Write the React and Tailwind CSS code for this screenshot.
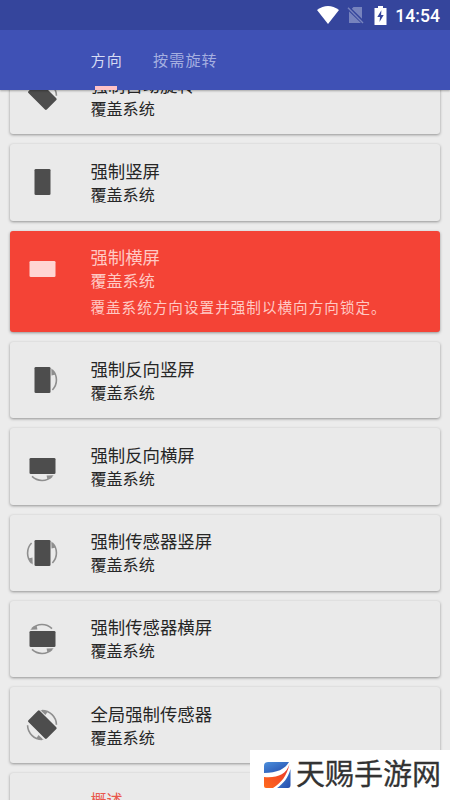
import React from 'react';

const FONT = "font-['Noto_Sans_CJK_SC',sans-serif]";

const items = [
    { title: '强制自动旋转', icon: 'auto' },
    { title: '强制竖屏', icon: 'portrait' },
    { title: '强制横屏', icon: 'landscape', note: '覆盖系统方向设置并强制以横向方向锁定。' },
    { title: '强制反向竖屏', icon: 'reversePortrait' },
    { title: '强制反向横屏', icon: 'reverseLandscape' },
    { title: '强制传感器竖屏', icon: 'sensorPortrait' },
    { title: '强制传感器横屏', icon: 'sensorLandscape' },
    { title: '全局强制传感器', icon: 'fullSensor' },
];

// one arc with its arrow head, drawn on the right side of the device
function Arc({ angle = 0 }) {
    return (
        <g transform={`rotate(${angle} 18 18)`}>
            <path d="M28.2 7.8A14.4 14.4 0 0 1 28.4 28" fill="none" stroke="#8f8f8f" strokeWidth="1.6" />
            <path d="M27.3 6.2L27.5 13.4L31.6 12.6Z" fill="#8f8f8f" />
        </g>
    );
}

function DeviceIcon({ type }) {
    const wide = type === 'landscape' || type === 'reverseLandscape' || type === 'sensorLandscape';
    const tilted = type === 'auto' || type === 'fullSensor';
    const fill = type === 'landscape' ? '#ffd5d3' : '#4d4d4d';
    return (
        <svg className="block size-9" viewBox="0 0 36 36">
            {(type === 'reversePortrait' || type === 'sensorPortrait') && <Arc />}
            {type === 'sensorPortrait' && <Arc angle={180} />}
            {(type === 'reverseLandscape' || type === 'sensorLandscape') && <Arc angle={90} />}
            {type === 'sensorLandscape' && <Arc angle={270} />}
            {tilted && <Arc angle={-45} />}
            {type === 'fullSensor' && <Arc angle={135} />}
            <rect
                x={wide ? 5.5 : 10.5}
                y={wide ? 10 : 5}
                width={wide ? 26 : 16}
                height={wide ? 16 : 26}
                rx="1.3"
                fill={fill}
                transform={tilted ? 'rotate(-45 18 18)' : undefined}
            />
        </svg>
    );
}

function Card({ item }) {
    const active = !!item.note;
    return (
        <div className={`flex shrink-0 rounded-[3px] pl-[14px] shadow-[0_1px_3px_rgba(0,0,0,0.38)] ${active ? 'h-[101.5px] bg-[#f44336] text-[#ffc9c4]' : 'h-[76.25px] bg-[#eaeaea] text-[#262626]'}`}>
            <div className="mt-[20px] w-[66.4px]">
                <DeviceIcon type={item.icon} />
            </div>
            <div>
                <div className="mt-[14.5px] text-[17.4px] leading-[24px]">{item.title}</div>
                <div className="text-[16.1px] leading-[22px]">覆盖系统</div>
                {active && <div className="mt-[5px] text-[14.6px] leading-[22px] tracking-[1px]">{item.note}</div>}
            </div>
        </div>
    );
}

function StatusBar() {
    return (
        <div className="flex h-[30px] items-center justify-end bg-[#35459c] pr-[10px] text-white">
            <svg className="h-[18px] w-[22px]" viewBox="0 0 22 18">
                <path d="M0 4Q11-4 22 4L11 18Z" fill="#fff" />
            </svg>
            <svg className="ml-[8px] h-[18px] w-[17px]" viewBox="0 0 17 18">
                <path d="M6.5 1H15V12.8L4.8 2.7ZM2 5.4L14 17H2Z" fill="#7783bd" />
                <path d="M1 1.8L16 17" stroke="#7783bd" strokeWidth="1.4" />
            </svg>
            <svg className="ml-[10px] h-[19px] w-[13px]" viewBox="0 0 13 19">
                <path d="M4 0H9V2H12.5V19H0.5V2H4Z" fill="#fff" />
                <path d="M7.4 4.3L3.3 11H6L5.5 16L9.7 9H7.1Z" fill="#35459c" />
            </svg>
            <span className="ml-[8px] pt-px font-[Roboto,sans-serif] text-[17.6px] font-medium leading-[30px]">14:54</span>
        </div>
    );
}

function Tabs() {
    return (
        <div className="flex h-[60px] bg-[#3f51b5] pl-[90.5px] text-[15.1px] leading-[22px] tracking-[1.1px]">
            <div className="flex w-[62.5px] flex-col justify-between pt-[18px]">
                <div className="text-[#d6dbf3]">方向</div>
                <div className="ml-[4.5px] h-[4px] w-[22px] bg-[#ffc1c6]" />
            </div>
            <div className="pt-[18px] text-[#a5afe0]">按需旋转</div>
        </div>
    );
}

function Watermark() {
    return (
        <div className="absolute bottom-0 right-0 flex h-[50px] w-[200px] items-center bg-white pl-[14px]">
            <svg className="h-[28px] w-[27px]" viewBox="0 0 27 28">
                <defs>
                    <linearGradient id="blue" x1="0" y1="0" x2="1" y2="1">
                        <stop offset="0" stopColor="#4b8fdc" />
                        <stop offset="1" stopColor="#244bab" />
                    </linearGradient>
                    <linearGradient id="red" x1="1" y1="0" x2="0" y2="1">
                        <stop offset="0" stopColor="#e9332b" />
                        <stop offset="1" stopColor="#ff6a1c" />
                    </linearGradient>
                </defs>
                <path d="M4 1H25C21 8 13 12 0 12V5Q0 1 4 1Z" fill="url(#blue)" />
                <path d="M25.5 3C22 14 13 17 0 16V25Q0 27 2 27H9C17 22 23 15 25.5 3Z" fill="url(#red)" />
                <path d="M26.5 8C24 17 19 23 13 27H24Q26.5 27 26.5 24Z" fill="url(#blue)" />
            </svg>
            <span className="ml-[5px] whitespace-nowrap pb-[6px] text-[29px] leading-[44px] text-[#333] [-webkit-text-stroke:0.3px_#333]">天赐手游网</span>
        </div>
    );
}

export default function App() {
    return (
        <div className={`relative flex h-[800px] w-[450px] flex-col overflow-hidden bg-[#ececec] ${FONT}`}>
            <header className="z-10 shrink-0 shadow-[0_1px_2px_rgba(0,0,0,0.3)]">
                <StatusBar />
                <Tabs />
            </header>
            <main className="-mt-[31.8px] flex flex-col gap-[10px] px-[10px]">
                {items.map(item => (
                    <Card key={item.title} item={item} />
                ))}
                <div className="h-[80px] shrink-0 rounded-[3px] bg-[#eaeaea] pl-[80.4px] pt-[15px] text-[16.1px] leading-[22px] text-[#e9584d] shadow-[0_1px_3px_rgba(0,0,0,0.38)]">
                    概述
                </div>
            </main>
            <Watermark />
        </div>
    );
}
